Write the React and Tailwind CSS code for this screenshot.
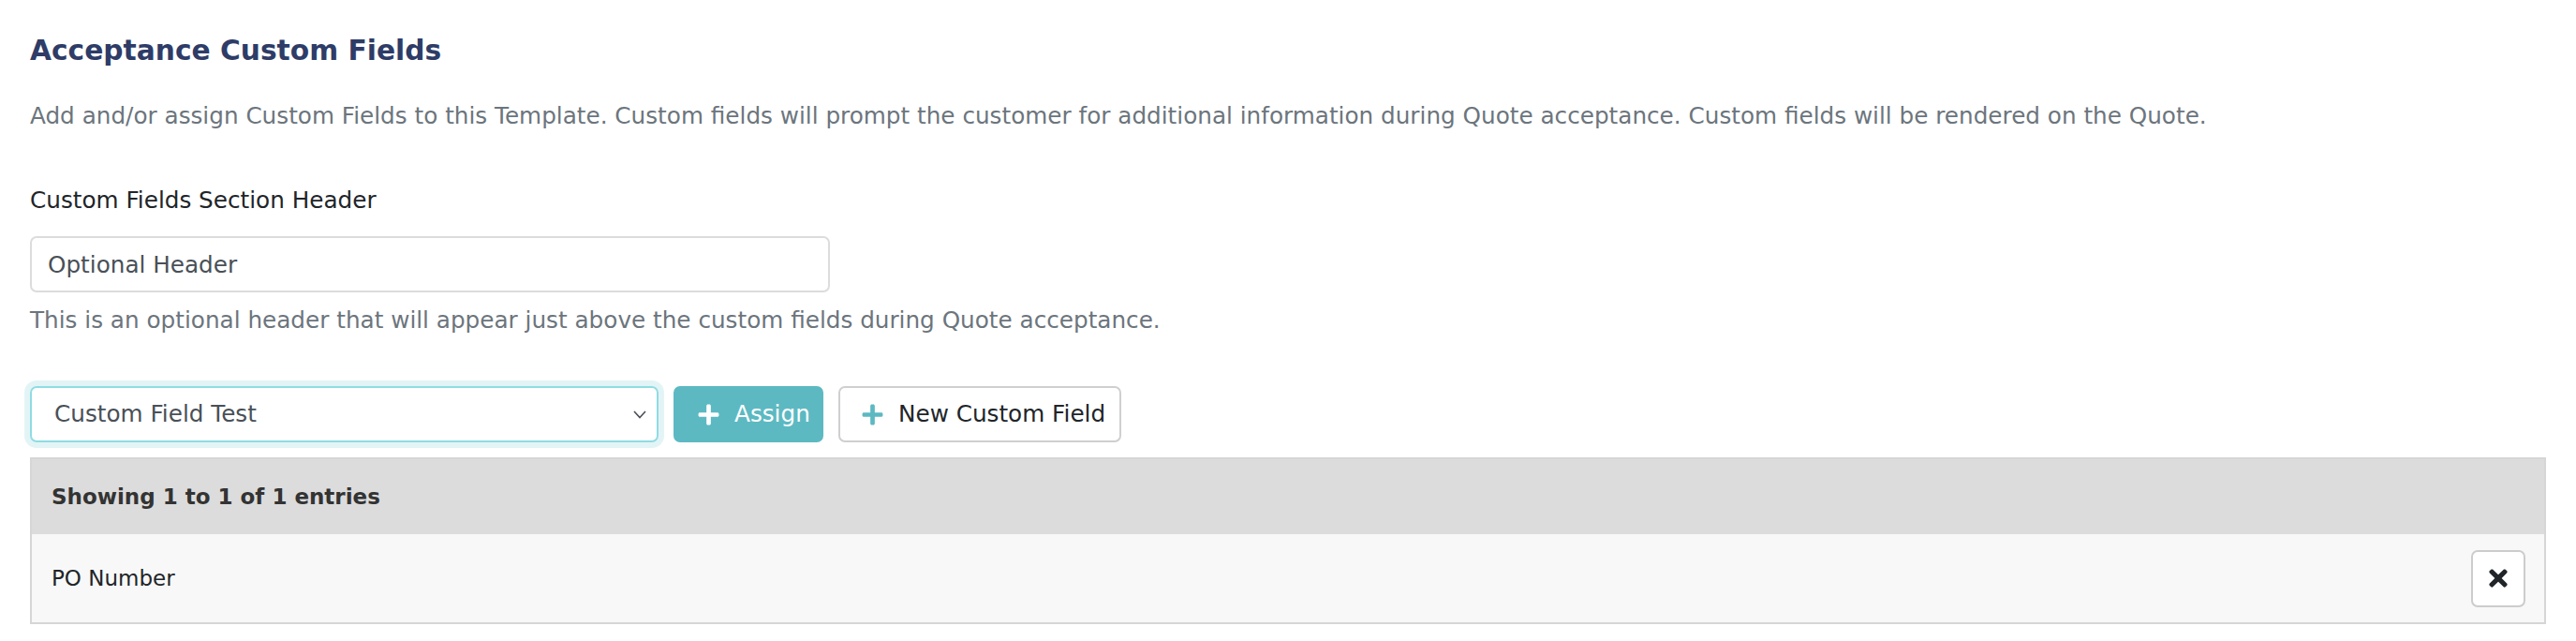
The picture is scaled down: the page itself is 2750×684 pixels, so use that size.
import React from 'react';
import { FaPlus, FaTimes } from 'react-icons/fa';

const ChevronDown = () => (
  <svg width="14" height="9" viewBox="0 0 14 9" fill="none">
    <polyline points="1,1 7,7.5 13,1" stroke="#495057" strokeWidth="1.6" />
  </svg>
);

const CustomFieldsTable = ({ rows = [] }) => {
  return (
    <div className="mt-[16px] border-2 border-[#d6d6d6]">
      <div className="h-[80px] bg-[#dcdcdc] flex items-center px-[21px]">
        <span className="text-[23px] font-bold text-[#333333]">
          Showing 1 to {rows.length} of {rows.length} entries
        </span>
      </div>
      {rows.map((row) => (
        <div key={row} className="h-[94px] bg-[#f8f8f8] flex items-center justify-between pl-[21px] pr-[20px]">
          <span className="text-[23px] text-[#212529]">{row}</span>
          <button className="w-[58px] h-[61px] bg-white border-2 border-[#cccccc] rounded-[7px] flex items-center justify-center text-[#212529]">
            <FaTimes size={28} />
          </button>
        </div>
      ))}
    </div>
  );
};

export default function App() {
  return (
    <div className="w-[2750px] h-[684px] bg-white px-[32px] pt-[36px] font-['DejaVu_Sans',sans-serif] text-[24.7px] text-[#212529]">
      <h2 className="text-[29.7px] leading-[36px] font-bold text-[#2e3c67]">Acceptance Custom Fields</h2>
      <p className="mt-[36px] leading-[32px] text-[#6c757d]">
        Add and/or assign Custom Fields to this Template. Custom fields will prompt the customer for additional information during Quote acceptance. Custom fields will be rendered on the Quote.
      </p>

      <label className="block mt-[58px] leading-[32px]">Custom Fields Section Header</label>
      <input
        readOnly
        defaultValue="Optional Header"
        className="block mt-[22px] w-[854px] h-[60px] px-[17px] border-2 border-[#dcdcdc] rounded-[7px] text-[24.7px] text-[#495057] outline-none"
      />
      <p className="mt-[14px] leading-[32px] text-[#6c757d]">
        This is an optional header that will appear just above the custom fields during Quote acceptance.
      </p>

      <div className="mt-[54px] flex items-center gap-[16px]">
        <div className="w-[671px] h-[60px] border-2 border-[#8fdce3] rounded-[7px] shadow-[0_0_0_6px_#e3f4f6] flex items-center justify-between pl-[24px] pr-[11px] text-[#495057]">
          <span>Custom Field Test</span>
          <ChevronDown />
        </div>
        <button className="h-[60px] w-[160px] rounded-[7px] bg-[#5cb9c2] text-white flex items-center gap-[15px] pl-[25px]">
          <FaPlus size={25} />
          <span>Assign</span>
        </button>
        <button className="h-[60px] w-[302px] rounded-[7px] bg-white border-2 border-[#cfcfcf] text-[#212529] flex items-center gap-[15px] pl-[22px]">
          <span className="text-[#5cb9c2]"><FaPlus size={25} /></span>
          <span>New Custom Field</span>
        </button>
      </div>

      <CustomFieldsTable rows={['PO Number']} />
    </div>
  );
}
